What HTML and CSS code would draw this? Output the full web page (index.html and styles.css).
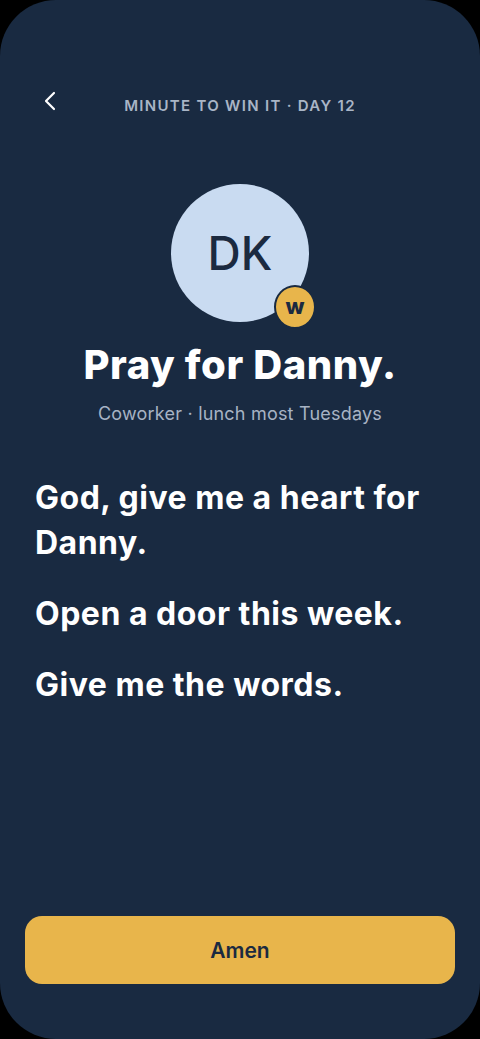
FILE: index.html
```html
<!DOCTYPE html>
<html lang="en">
<head>
  <meta charset="UTF-8">
  <meta name="viewport" content="width=device-width, initial-scale=1.0">
  <title>Minute to Win It - Day 12</title>
  <link rel="stylesheet" href="styles.css">
</head>
<body>

  <div class="screen">
    <header class="top-bar">
      <button class="back" aria-label="Back">
        <svg width="14" height="20" viewBox="0 0 14 20" fill="none">
          <path d="M11 2 L3 10 L11 18" stroke="#ffffff" stroke-width="2.2" stroke-linecap="round" stroke-linejoin="round"/>
        </svg>
      </button>
      <p class="eyebrow">MINUTE TO WIN IT · DAY 12</p>
    </header>

    <div class="person">
      <div class="avatar">
        DK
        <span class="badge">w</span>
      </div>
      <h1>Pray for Danny.</h1>
      <p class="relation">Coworker · lunch most Tuesdays</p>
    </div>

    <div class="prayer">
      <p>God, give me a heart for Danny.</p>
      <p>Open a door this week.</p>
      <p>Give me the words.</p>
    </div>

    <button class="amen">Amen</button>
  </div>

</body>
</html>
```

FILE: styles.css
```css
body {
  margin: 0;
  padding: 0;
  background-color: #000;
  font-family: 'Inter', 'Noto Sans', sans-serif;
}

.screen {
  height: 1039px;
  box-sizing: border-box;
  background-color: #192a41;
  border-radius: 56px;
  padding: 88px 25px 55px;
  display: flex;
  flex-direction: column;
  overflow: hidden;
}

.top-bar {
  position: relative;
  display: flex;
  justify-content: center;
  align-items: center;
  height: 32px;
}

.back {
  position: absolute;
  left: 18px;
  top: 3px;
  background: none;
  border: none;
  padding: 0;
  cursor: pointer;
}

.eyebrow {
  margin: 0;
  margin-top: 2px;
  color: #a9b5c6;
  font-size: 15px;
  font-weight: 600;
  letter-spacing: 1.3px;
}

.person {
  display: flex;
  flex-direction: column;
  align-items: center;
  margin-top: 64px;
}

.avatar {
  position: relative;
  width: 138px;
  height: 138px;
  border-radius: 50%;
  background-color: #c9dbf1;
  color: #1b2a40;
  font-size: 46px;
  font-weight: 500;
  display: flex;
  align-items: center;
  justify-content: center;
}

.badge {
  position: absolute;
  right: -7px;
  bottom: -7px;
  width: 38px;
  height: 38px;
  border-radius: 50%;
  background-color: #e8b54b;
  border: 2px solid #192a41;
  color: #1b2a40;
  font-size: 22px;
  font-weight: 800;
  display: flex;
  align-items: center;
  justify-content: center;
  line-height: 1;
  padding-bottom: 2px;
  box-sizing: content-box;
}

h1 {
  margin: 19px 0 0;
  color: #ffffff;
  font-size: 40px;
  font-weight: 800;
  letter-spacing: 0.6px;
  line-height: 48px;
}

.relation {
  margin: 13px 0 0;
  color: #a7b3c4;
  font-size: 18px;
  letter-spacing: 0.2px;
  line-height: 24px;
}

.prayer {
  margin-top: 49px;
  padding: 0 10px;
  flex: 1;
}

.prayer p {
  margin: 0 0 26px;
  color: #ffffff;
  font-size: 32px;
  font-weight: 700;
  line-height: 45px;
  letter-spacing: 0.5px;
}

.amen {
  height: 68px;
  width: 100%;
  border: none;
  border-radius: 17px;
  background-color: #e8b54b;
  color: #1b2a40;
  font-family: 'Inter', 'Noto Sans', sans-serif;
  font-size: 21px;
  font-weight: 600;
  cursor: pointer;
}
```
